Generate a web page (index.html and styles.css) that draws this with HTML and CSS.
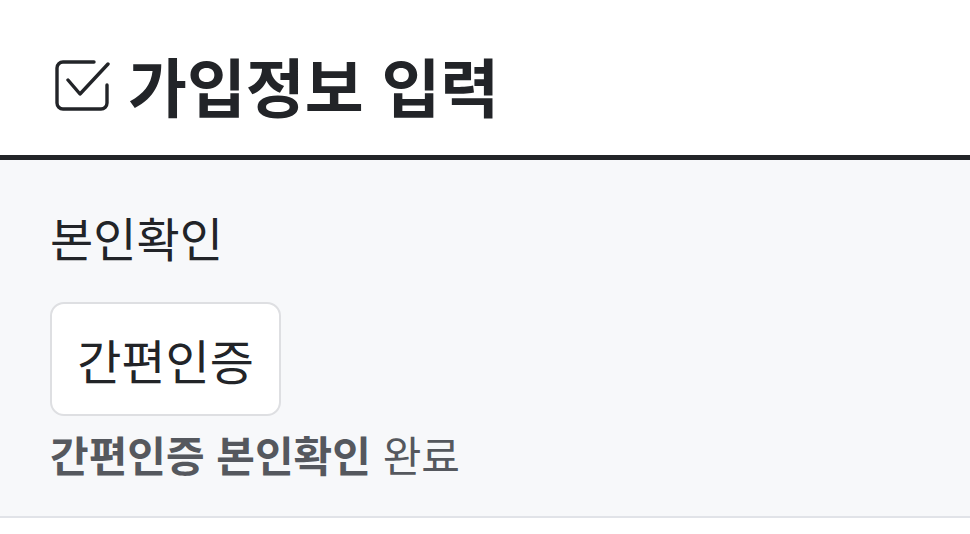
FILE: index.html
```html
<!DOCTYPE html>
<html lang="ko">
<head>
<meta charset="UTF-8">
<meta name="viewport" content="width=device-width, initial-scale=1.0">
<title>가입정보 입력</title>
<link rel="stylesheet" href="styles.css">
</head>
<body>
<div class="page">
  <header class="title-bar">
    <svg class="title-icon" viewBox="0 0 56 56" width="56" height="56" aria-hidden="true">
      <path d="M40 5H9a6 6 0 0 0-6 6v35a6 6 0 0 0 6 6h38a6 6 0 0 0 6-6V28" />
      <path d="M14 23l12 14L54 7" />
    </svg>
    <h1 class="title">가입정보 입력</h1>
  </header>

  <section class="verify">
    <div class="verify-label">본인확인</div>
    <button class="verify-btn" type="button">간편인증</button>
    <p class="verify-status"><strong>간편인증 본인확인</strong> 완료</p>
  </section>
</div>
</body>
</html>
```

FILE: styles.css
```css
body {
  margin: 0;
  background-color: #fff;
  font-family: "Noto Sans CJK KR", "Noto Sans", sans-serif;
  color: #222428;
}

.title-bar {
  display: flex;
  align-items: center;
  gap: 18px;
  height: 160px;
  padding: 24px 0 0 54px;
  border-bottom: 5px solid #222428;
  box-sizing: border-box;
}

.title-icon {
  fill: none;
  stroke: #222428;
  stroke-width: 3.4;
  stroke-linecap: round;
  stroke-linejoin: round;
  margin-top: -10px;
}

.title {
  margin: -12px 0 0;
  font-size: 64px;
  font-weight: 700;
  letter-spacing: 0;
}

.verify {
  background-color: #f7f8fa;
  border-bottom: 2px solid #e1e3e8;
  padding: 44px 50px 0;
  height: 358px;
  box-sizing: border-box;
}

.verify-label {
  font-size: 47px;
  line-height: 66px;
}

.verify-btn {
  display: block;
  margin-top: 32px;
  width: 231px;
  height: 114px;
  background-color: #fff;
  border: 2px solid #dedfe2;
  border-radius: 14px;
  font-family: inherit;
  font-size: 48px;
  color: #222428;
  padding: 0;
}

.verify-status {
  margin: 9px 0 0;
  font-size: 42px;
  line-height: 58px;
  color: #55585e;
}

.verify-status strong {
  font-weight: 700;
}
```
